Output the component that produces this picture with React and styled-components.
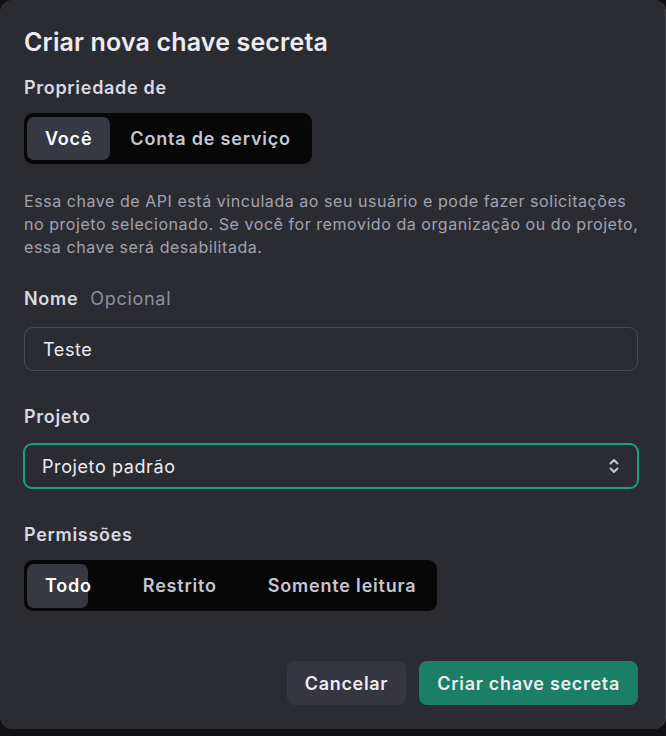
import React from "react";
import styled, { createGlobalStyle } from "styled-components";

const Global = createGlobalStyle`
  html, body { margin: 0; padding: 0; background: #111113; }
  body { font-family: Inter, "Noto Sans", "Liberation Sans", sans-serif; -webkit-font-smoothing: antialiased; }
  * { box-sizing: border-box; }
`;

const Panel = styled.div`
  width: 666px;
  background: #2b2c32;
  border-radius: 12px;
  border-right: 1px solid #45464d;
  padding: 27px 27px 24px 24px;
  display: flex;
  flex-direction: column;
  color: #ececf1;
`;

const Title = styled.h2`
  margin: 0;
  font-size: 25px;
  line-height: 30px;
  font-weight: 600;
  color: #ececf1;
  letter-spacing: 0.15px;
`;

const Label = styled.div`
  margin-top: ${(p) => p.$top}px;
  font-size: 18px;
  line-height: 24px;
  font-weight: 600;
  letter-spacing: 0.7px;
  color: #d9d9e3;
  display: flex;
  gap: 12px;
`;

const Optional = styled.span`
  font-weight: 400;
  color: #8e8ea0;
`;

const Segmented = styled.div`
  position: relative;
  margin-top: 13px;
  align-self: flex-start;
  display: flex;
  gap: ${(p) => p.$gap}px;
  height: 51px;
  padding: 4px 3px;
  background: #070708;
  border-radius: 9px;
`;

const Indicator = styled.div`
  position: absolute;
  top: 4px;
  bottom: 3px;
  left: 3px;
  width: ${(p) => p.$width}px;
  background: #363842;
  border-radius: 7px;
`;

const SegItem = styled.div`
  position: relative;
  display: flex;
  align-items: center;
  padding: 0 18px;
  border-radius: 7px;
  font-size: 18px;
  font-weight: 600;
  letter-spacing: 0.8px;
  background: ${(p) => (p.$active ? "#363842" : "transparent")};
  color: ${(p) => (p.$selected ? "#ffffff" : "#c5c5d2")};
  white-space: nowrap;
`;

const Description = styled.p`
  margin: 26px -6px 0 0;
  font-size: 16px;
  line-height: 23px;
  letter-spacing: 0.55px;
  color: #a3a3b0;
`;

const Field = styled.div`
  margin-top: ${(p) => p.$top}px;
  height: ${(p) => p.$h}px;
  border: ${(p) => (p.$focus ? "2px solid #14a37e" : "1px solid #4a4b55")};
  border-radius: 9px;
  display: flex;
  align-items: center;
  justify-content: space-between;
  padding: 0 ${(p) => (p.$focus ? 17 : 18)}px;
  font-size: 18px;
  letter-spacing: 0.6px;
  color: #ececf1;
  margin-left: ${(p) => (p.$focus ? -1 : 0)}px;
  margin-right: ${(p) => (p.$focus ? -1 : 0)}px;
`;

const Footer = styled.div`
  margin-top: 50px;
  display: flex;
  justify-content: flex-end;
  gap: 13px;
`;

const Button = styled.button`
  height: 44px;
  border: none;
  border-radius: 8px;
  padding: 0 18px;
  font-family: inherit;
  font-size: 18px;
  font-weight: 600;
  letter-spacing: 0.7px;
  color: #ececf1;
  background: ${(p) => (p.$primary ? "#1a7f64" : "#35363f")};
`;

const Chevrons = () => (
  <svg width="12" height="18" viewBox="0 0 12 18" fill="none" stroke="#c5c5d2" strokeWidth="2" strokeLinecap="round" strokeLinejoin="round">
    <path d="M2.5 6.5 6 3l3.5 3.5" />
    <path d="M2.5 11.5 6 15l3.5-3.5" />
  </svg>
);

export default function App() {
  return (
    <>
      <Global />
      <Panel>
        <Title>Criar nova chave secreta</Title>
        <Label $top={19}>Propriedade de</Label>
        <Segmented $gap={2}>
          <SegItem $active $selected>Você</SegItem>
          <SegItem>Conta de serviço</SegItem>
        </Segmented>
        <Description>
          Essa chave de API está vinculada ao seu usuário e pode fazer solicitações no projeto selecionado. Se você for removido da organização ou do projeto, essa chave será desabilitada.
        </Description>
        <Label $top={28}>
          Nome <Optional>Opcional</Optional>
        </Label>
        <Field $top={16} $h={44}>Teste</Field>
        <Label $top={34}>Projeto</Label>
        <Field $top={14} $h={46} $focus>
          Projeto padrão
          <Chevrons />
        </Field>
        <Label $top={34}>Permissões</Label>
        <Segmented $gap={15}>
          <Indicator $width={61} />
          <SegItem $selected>Todo</SegItem>
          <SegItem>Restrito</SegItem>
          <SegItem>Somente leitura</SegItem>
        </Segmented>
        <Footer>
          <Button>Cancelar</Button>
          <Button $primary>Criar chave secreta</Button>
        </Footer>
      </Panel>
    </>
  );
}
